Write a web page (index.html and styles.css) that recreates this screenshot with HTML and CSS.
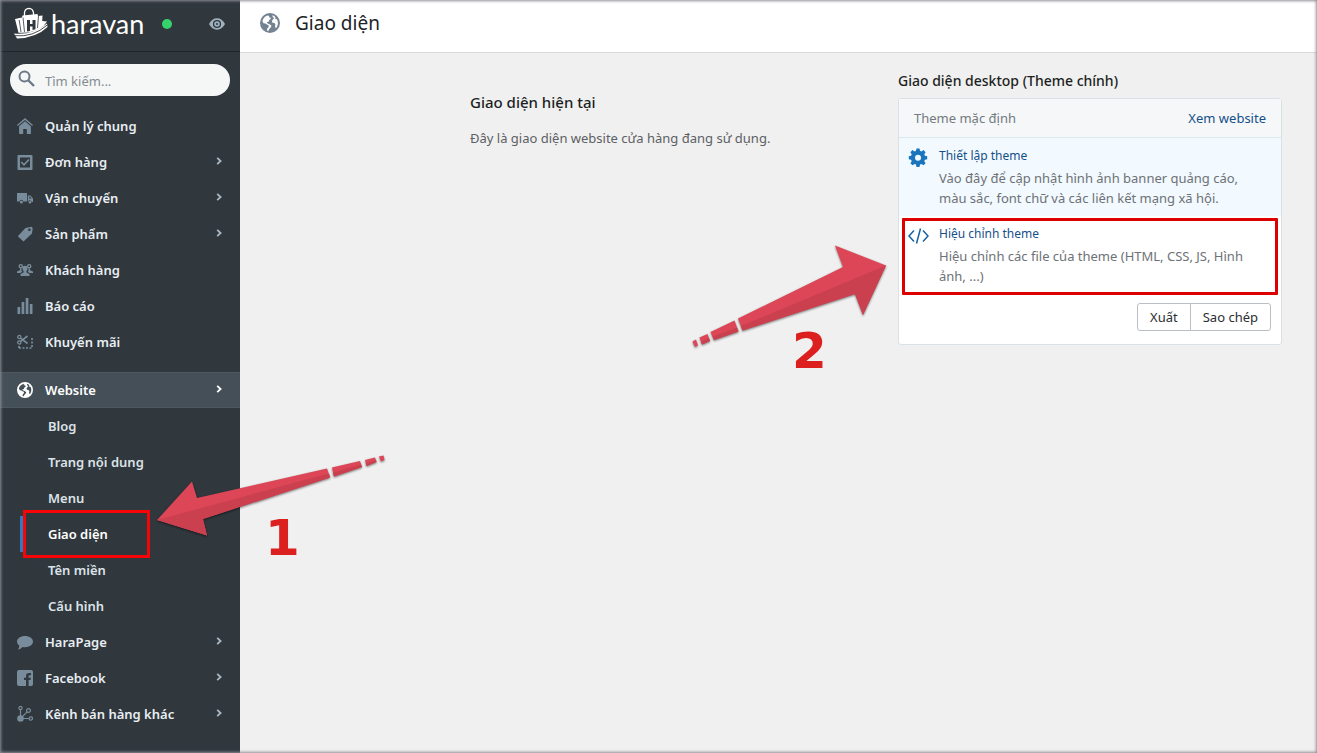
FILE: index.html
```
<!DOCTYPE html>
<html lang="vi">
<head>
<meta charset="utf-8">
<title>Giao diện - Haravan</title>
<link rel="stylesheet" href="styles.css">
</head>
<body>
<svg class="defs" aria-hidden="true">
  <symbol id="globe" viewBox="0 0 20 20">
    <path fill-rule="evenodd" d="M10 0a10 10 0 1 1 0 20a10 10 0 0 1 0-20zM7.600 2.500C5 3.400 3 5.400 2.400 8L3.500 10.200L5.300 10.600L7 11.500L8.800 12.600L8.400 14.500L7.300 15.300L6.900 17.400L8.300 17.900L9.400 15.800L10.900 14.300L11.500 12.700L9.600 11.200L7.700 10.500L6.600 9.300L8.600 8.800L9.300 7L10.900 5.600L10.200 4.200L8.700 4.500L9.300 3.100zM12.300 2.300L12.800 4.300L14.300 5L12.900 6.600L11.900 8.100L12.500 9.800L14.400 10L15.400 11.600L15 14.200L16.300 14.900C18.300 12.200 18.400 8.700 16.900 6L15.600 6.300L15.200 4.400L15.300 3.900C14.400 3.100 13.400 2.600 12.300 2.300z"/>
  </symbol>
  <symbol id="chevron" viewBox="0 0 6 8"><path d="M1.200 .8L4.600 4L1.200 7.200" fill="none" stroke="currentColor" stroke-width="1.800"/></symbol>
</svg>

<div class="app">
  <aside class="sidebar">
    <div class="brand">
      <a class="logo" href="#">
        <svg viewBox="0 0 36 33" width="36" height="33" aria-hidden="true">
          <path d="M11.500 9V5.500Q12 1.500 16 1.300Q20 1.500 20.500 6V9" fill="none" stroke="#fff" stroke-width="1.300"/>
          <path fill="#fff" d="M2 12L9 10.500L9.500 8.500L24.500 7L25 9L29.500 8.500L29.200 14L34 14.500L30.500 19Q22 26.500 5.500 25.800z"/>
          <path d="M10 10.500L11.500 25M6.200 13L8 25M25.500 9L24.500 21" stroke="#30373d" stroke-width=".8" fill="none"/>
          <path d="M14 13h3v4h2.500v-4h3v9.200l-3 .8v-3.500h-2.500v4.500l-3 .5z" fill="#30373d"/>
          <path d="M1 26.500Q19 28.500 34 16.500L34.500 20Q23 31 4 31.500z" fill="#fff"/>
          <path d="M2 28.700Q20 30.500 34.300 18" stroke="#30373d" stroke-width=".9" fill="none"/>
        </svg>
        <span class="wordmark">haravan</span>
      </a>
      <span class="status"></span>
      <a class="eye" href="#" aria-label="Xem website">
        <svg viewBox="0 0 16 12" width="16" height="12"><path fill="currentColor" fill-rule="evenodd" d="M0 6Q3 .3 8 .3T16 6Q13 11.700 8 11.700T0 6zM8 1.900a4.100 4.100 0 1 0 0 8.200a4.100 4.100 0 0 0 0-8.200z"/><path fill="currentColor" fill-rule="evenodd" d="M8 3.200a2.800 2.800 0 1 1 0 5.600a2.800 2.800 0 0 1 0-5.600zM8 5a1 1 0 1 0 0 2a1 1 0 0 0 0-2z"/></svg>
      </a>
    </div>

    <form class="search">
      <svg viewBox="0 0 17 17" width="17" height="17" aria-hidden="true"><circle cx="6.500" cy="6.500" r="5" fill="none" stroke="currentColor" stroke-width="2"/><path d="M10 10L16 16" stroke="currentColor" stroke-width="2.400"/></svg>
      <input type="text" placeholder="Tìm kiếm..." aria-label="Tìm kiếm">
    </form>

    <nav class="nav">
      <a href="#" class="item"><svg class="ico" viewBox="0 0 16 16"><path d="M8 0L16 7L15.200 8.100L8 2L.8 8.100L0 7zM8 3.200L13.900 8.200V16H9.800V11H6.200V16H2.100V8.200z"/></svg><span>Quản lý chung</span></a>
      <a href="#" class="item"><svg class="ico" viewBox="0 0 16 16"><path fill-rule="evenodd" d="M1.500 1h13a1 1 0 0 1 1 1v13a1 1 0 0 1-1 1h-13a1 1 0 0 1-1-1V2a1 1 0 0 1 1-1zM3 3.500v10h10v-10z"/><path d="M4.300 8L7 10.800L12 5.500" fill="none" stroke="currentColor" stroke-width="1.700"/></svg><span>Đơn hàng</span><svg class="chev"><use href="#chevron"/></svg></a>
      <a href="#" class="item"><svg class="ico" viewBox="0 0 16 16"><path fill-rule="evenodd" d="M0 3h10v8.500H6.200a1.800 1.800 0 0 0-3.600 0H0zM10.800 5.500H13.500L16 8.500V12H14.600a1.700 1.700 0 0 0-3.300-.5H10.800zM12.300 6.600V8.500H14.500L13 6.600z"/><circle cx="4.400" cy="12" r="1.500"/><circle cx="13" cy="12.300" r="1.300"/></svg><span>Vận chuyển</span><svg class="chev"><use href="#chevron"/></svg></a>
      <a href="#" class="item"><svg class="ico" viewBox="0 0 16 16"><path fill-rule="evenodd" d="M8.500 2L14.500 .8L15.700 2L15 7.500L6.500 15.600L.8 10.200zM12.400 2.500a1.300 1.300 0 1 0 0 2.600a1.300 1.300 0 0 0 0-2.600z"/></svg><span>Sản phẩm</span><svg class="chev"><use href="#chevron"/></svg></a>
      <a href="#" class="item"><svg class="ico" viewBox="0 0 16 16"><g fill="none" stroke="currentColor" stroke-width="1.400"><circle cx="3.800" cy="4.200" r="1.600"/><circle cx="12.200" cy="4.200" r="1.600"/></g><path d="M8 3.800a2.500 2.500 0 0 1 2.500 2.700c0 1.500-.7 2.300-1.200 2.900v.9L12.500 12v2H3.500v-2l3.200-1.700v-.9C6.200 8.800 5.500 8 5.500 6.500A2.500 2.500 0 0 1 8 3.800zM3 6.500H4.500V9L5.300 9.500L3.500 11H0V9.500L3 8.200zM13 6.500H11.500V9L10.700 9.500L12.500 11H16V9.500L13 8.200z"/></svg><span>Khách hàng</span></a>
      <a href="#" class="item"><svg class="ico" viewBox="0 0 16 16"><path d="M.5 9h2.700v7H.5zM4.600 4h2.700v12H4.600zM8.700 0h2.700v16H8.700zM12.800 6h2.700v10h-2.700z"/></svg><span>Báo cáo</span></a>
      <a href="#" class="item"><svg class="ico" viewBox="0 0 16 16"><g fill="none" stroke="currentColor" stroke-width="1.300"><circle cx="2.300" cy="3" r="1.600"/><circle cx="2.300" cy="8.500" r="1.600"/><path stroke-width="1.600" d="M3.600 7.300L10.500 2M3.600 4.200L10.500 9.500"/><path stroke-width="1.700" stroke-dasharray="2 1.500" d="M15 4V14H2M2 14V12"/></g></svg><span>Khuyến mãi</span></a>

      <a href="#" class="item open"><svg class="ico"><use href="#globe"/></svg><span>Website</span><svg class="chev"><use href="#chevron"/></svg></a>
      <div class="sub">
        <a href="#">Blog</a>
        <a href="#">Trang nội dung</a>
        <a href="#">Menu</a>
        <a href="#" class="current">Giao diện</a>
        <a href="#">Tên miền</a>
        <a href="#">Cấu hình</a>
      </div>

      <a href="#" class="item"><svg class="ico" viewBox="0 0 16 16"><path d="M8 2c4.400 0 8 2.400 8 5.600s-3.600 5.600-8 5.600c-.9 0-1.800-.1-2.600-.3C4.300 14.200 2.800 15.300 1 15.600C1.800 14.600 2.300 13.200 2.300 11.600C.9 10.600 0 9.200 0 7.600C0 4.400 3.600 2 8 2z"/></svg><span>HaraPage</span><svg class="chev"><use href="#chevron"/></svg></a>
      <a href="#" class="item"><svg class="ico" viewBox="0 0 16 16"><path fill-rule="evenodd" d="M2 0h12a2 2 0 0 1 2 2v12a2 2 0 0 1-2 2H11.600V10H13.500L13.900 7.700H11.600V6.300C11.600 5.500 12 5.200 12.700 5.200H14V3H12C10 3 9 4.200 9 6V7.700H7V10H9V16H2a2 2 0 0 1-2-2V2a2 2 0 0 1 2-2z"/></svg><span>Facebook</span><svg class="chev"><use href="#chevron"/></svg></a>
      <a href="#" class="item"><svg class="ico" viewBox="0 0 16 16"><circle cx="3.500" cy="12.500" r="3.300"/><g fill="none" stroke="currentColor" stroke-width="1.200"><circle cx="3.500" cy="2" r="1.600"/><circle cx="11.500" cy="4.500" r="1.900"/><circle cx="13.800" cy="12.500" r="1.700"/><path d="M3.500 3.600V10M10.200 5.900L5.500 10.500M6 12.500H12"/></g></svg><span>Kênh bán hàng khác</span><svg class="chev"><use href="#chevron"/></svg></a>
    </nav>
  </aside>

  <main class="main">
    <header class="topbar">
      <svg class="page-ico" aria-hidden="true"><use href="#globe"/></svg>
      <h1>Giao diện</h1>
    </header>

    <div class="content">
      <section class="intro">
        <h2>Giao diện hiện tại</h2>
        <p>Đây là giao diện website cửa hàng đang sử dụng.</p>
      </section>

      <section class="theme">
        <h2>Giao diện desktop (Theme chính)</h2>
        <div class="card">
          <div class="card-head"><span>Theme mặc định</span><a href="#">Xem website</a></div>
          <div class="option tinted">
            <svg class="opt-ico" viewBox="0 0 22 22" aria-hidden="true"><path fill="#1a75bd" fill-rule="evenodd" d="M9.500 2.500h3l.5 2.300l1.500.6l2-1.300l2.100 2.100l-1.300 2l.6 1.500l2.300.5v3l-2.300.5l-.6 1.500l1.300 2l-2.100 2.100l-2-1.300l-1.500.6l-.5 2.300h-3l-.5-2.300l-1.500-.6l-2 1.300l-2.100-2.100l1.300-2l-.6-1.500l-2.300-.5v-3l2.300-.5l.6-1.500l-1.300-2l2.100-2.100l2 1.300l1.500-.6zM11 8.700a3 3 0 1 0 0 6a3 3 0 0 0 0-6z"/></svg>
            <div>
              <a href="#">Thiết lập theme</a>
              <p>Vào đây để cập nhật hình ảnh banner quảng cáo, màu sắc, font chữ và các liên kết mạng xã hội.</p>
            </div>
          </div>
          <div class="option marked">
            <svg class="opt-ico" viewBox="0 0 22 22" aria-hidden="true"><path fill="none" stroke="#1762a3" stroke-width="1.500" d="M7 6.500L2 12L7 17.500M16 6.500L21 12L16 17.500M13.500 4.500L9.500 19.500"/></svg>
            <div>
              <a href="#">Hiệu chỉnh theme</a>
              <p>Hiệu chỉnh các file của theme (HTML, CSS, JS, Hình ảnh, ...)</p>
            </div>
          </div>
          <div class="actions"><button type="button">Xuất</button><button type="button">Sao chép</button></div>
        </div>
      </section>
    </div>
  </main>

  <svg class="notes" width="900" height="600" viewBox="0 0 900 600">
    <g class="arrow">
      <path class="light" d="M157 520L192 481.500L197 498L327 468.500L330 477.500L203 519L207 535.500zM332 467.500L360 461L362 467L334 476.500zM365 460L375 457.500L376.500 462L366.500 466zM379 456.500L383.500 455.500L384.500 460L381 461.500z"/>
      <path class="dark" d="M157 520L329 473.500L330 477.500L203 519L207 535.500zM333 472.500L361 464.500L362 467L334 476.500zM366 463L376 460L376.500 462L366.500 466z"/>
    </g>
    <g class="arrow">
      <path class="light" d="M886 265.500L835 245.500L843 267L738 318.500L742.500 330.500L855 294L863 315zM734.500 320.500L738.500 331.500L714 340L710.500 332zM707.500 334L710 341L702 344.500L699.500 337.500zM696 339.500L698 345.500L695 347L692.500 341.500z"/>
      <path class="dark" d="M886 265.500L741 326L742.500 330.500L855 294L863 315zM737 327.500L738.500 331.500L714 340L712.500 336.500zM709 338L710 341L702 344.500L701 341.500z"/>
    </g>
    <text class="num" x="265" y="555">1</text>
    <text class="num" x="792" y="368">2</text>
  </svg>
</div>
</body>
</html>
```

FILE: styles.css
```
*, *::before, *::after { box-sizing: border-box; }
body {
  margin: 0;
  font-family: "Noto Sans", "Open Sans", sans-serif;
  font-size: 13px;
  line-height: 20px;
  color: #5c6064;
  background: #f0f0f0;
}
h1, h2, p { margin: 0; }
a { text-decoration: none; color: #15508a; }
.defs { position: absolute; width: 0; height: 0; }

.app { position: relative; display: flex; min-height: 100vh; overflow: hidden; }
.app::after {
  content: "";
  position: absolute;
  inset: 0;
  pointer-events: none;
  box-shadow: inset 0 0 3px 1px #8e8e96;
}

.sidebar { flex: none; width: 240px; background: #30373d; }
.brand {
  display: flex;
  align-items: center;
  height: 52px;
  padding: 0 15px 4px 13px;
  border-bottom: 1px solid #1f262b;
}
.logo { display: flex; align-items: center; gap: 2px; color: #fff; }
.wordmark { font: 27px/32px Lato, sans-serif; }
.status { width: 10px; height: 10px; margin: 0 auto 0 18px; border-radius: 50%; background: #36d36d; }
.eye { display: flex; color: #9fb0bf; }

.search {
  display: flex;
  align-items: center;
  gap: 10px;
  height: 32px;
  margin: 12px 10px;
  padding: 0 8px;
  border-radius: 16px;
  background: #f5f7f7;
  color: #6b7a86;
}
.search svg { flex: none; margin-bottom: 4px; }
.search input {
  flex: 1;
  min-width: 0;
  padding: 2px 0 0;
  border: 0;
  outline: 0;
  background: none;
  font: inherit;
}
.search input::placeholder { color: #858b90; opacity: 1; }

.nav { font-weight: 600; }
.item, .sub a { display: flex; align-items: center; height: 36px; color: #e8eef3; }
.item { padding: 0 17px; }
.item span { flex: 1; }
.ico { width: 16px; height: 16px; margin-right: 12px; color: #798c9c; fill: currentColor; }
.chev { width: 6px; height: 8px; color: #a9b8c5; margin: 0 1px 2px 0; }
.open {
  margin-top: 12px;
  background: #454f57;
  border-top: 1px solid #4d5860;
  border-bottom: 1px solid #4d5860;
  color: #fff;
}
.open .ico, .open .chev { color: #fff; }
.sub a { position: relative; margin-left: 20px; padding-left: 28px; color: #dce3e8; }
.sub .current { color: #fff; }
.sub .current::before {
  content: "";
  position: absolute;
  inset: 0 auto 0 0;
  width: 4px;
  background: #2a7cc7;
}
.sub .current::after {
  content: "";
  position: absolute;
  left: 3px;
  top: -6px;
  width: 127px;
  height: 48px;
  border: 3px solid #f50505;
}

.main { flex: 1; min-width: 0; }
.topbar {
  display: flex;
  align-items: center;
  gap: 15px;
  height: 53px;
  padding: 0 20px 6px;
  background: #fff;
  border-bottom: 1px solid #d9d9d9;
}
.topbar h1 { font-size: 19px; line-height: 28px; font-weight: 400; color: #212427; }
.page-ico { width: 20px; height: 20px; fill: #748391; }

.content {
  display: grid;
  grid-template-columns: 428fr 384fr;
  padding: 17px 35px 0 230px;
}
.content h2 { font-size: 14px; line-height: 22px; font-weight: 500; color: #1c1f22; }
.intro { padding-top: 21px; }
.content .intro h2 { font-size: 15px; }
.intro p { margin-top: 15px; }

.card {
  margin-top: 6px;
  padding-bottom: 13px;
  border: 1px solid #dae1e6;
  border-radius: 3px;
  background: #fff;
}
.card-head {
  display: flex;
  justify-content: space-between;
  padding: 9px 15px;
  background: #f5f7f8;
  border-bottom: 1px solid #dde8ee;
  color: #737a80;
}
.option { position: relative; display: flex; gap: 10px; padding: 8px 24px 8px 8px; }
.option > div { flex: 1; }
.option a { display: block; font-size: 12px; }
.option p { margin-top: 2px; color: #6d7276; }
.tinted { background: #f2f9ff; }
.opt-ico { flex: none; width: 22px; height: 22px; }
.marked::after {
  content: "";
  position: absolute;
  inset: 2px 3px -1px;
  border: 3px solid #dc0000;
  border-radius: 1px;
}
.actions { display: flex; justify-content: flex-end; padding: 9px 10px 0; }
.actions button {
  height: 28px;
  padding: 0 12px;
  border: 1px solid #b9bfc4;
  border-radius: 3px 0 0 3px;
  background: #fff;
  font: inherit;
  color: #2b2e31;
}
.actions button + button { margin-left: -1px; border-radius: 0 3px 3px 0; }

.notes { position: absolute; left: 0; top: 0; pointer-events: none; }
.arrow { filter: drop-shadow(0 1px 1px rgba(0, 0, 0, .5)); }
.light { fill: #dc4656; }
.dark { fill: #ca404f; }
.num { font: bold 50px "DejaVu Sans", sans-serif; fill: #dc1f1f; }
```
